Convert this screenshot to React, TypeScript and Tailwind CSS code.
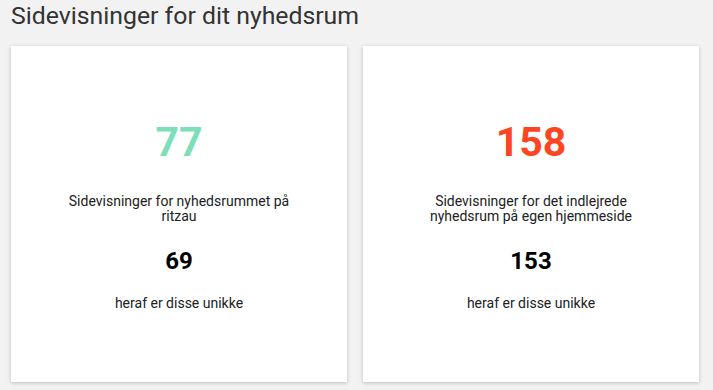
import React from "react";

function Card({ big, color, desc, small }: { big: string; color: string; desc: string; small: string }) {
  return (
    <div className="w-[336px] h-[336px] bg-white shadow-[0_1px_4px_rgba(0,0,0,0.22)] flex flex-col items-center pt-[76px] px-[48px] text-center">
      <div className={`text-[41px] leading-[41px] font-bold ${color}`}>{big}</div>
      <div className="mt-[31px] text-[14px] leading-[15px] text-[#212121]">{desc}</div>
      <div className="mt-[25px] text-[24px] leading-[24px] font-bold text-black">{small}</div>
      <div className="mt-[23px] text-[14px] leading-[15px] text-[#212121]">heraf er disse unikke</div>
    </div>
  );
}

export default function App() {
  return (
    <div className="w-[713px] h-[390px] bg-[#f2f2f2] px-[11px] pt-[1px] overflow-hidden" style={{ fontFamily: "Roboto, 'Liberation Sans', sans-serif" }}>
      <div className="text-[24.8px] leading-[29px] text-[#333333]">Sidevisninger for dit nyhedsrum</div>
      <div className="mt-[16px] flex gap-[16px]">
        <Card big="77" color="text-[#7ddfb9]" desc="Sidevisninger for nyhedsrummet på ritzau" small="69" />
        <Card big="158" color="text-[#ff4422]" desc="Sidevisninger for det indlejrede nyhedsrum på egen hjemmeside" small="153" />
      </div>
    </div>
  );
}
